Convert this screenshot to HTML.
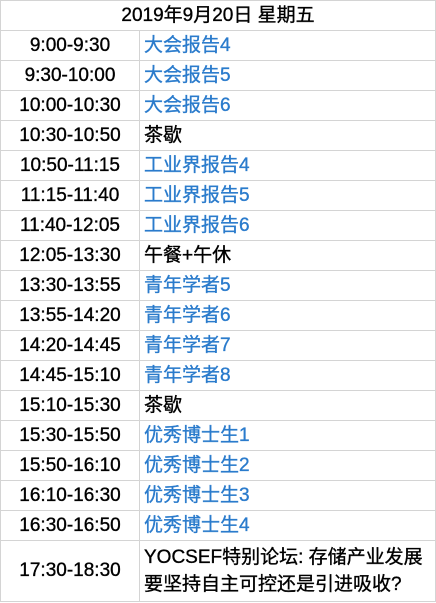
<!DOCTYPE html>
<html><head><meta charset="utf-8"><style>
body{margin:0;background:#fff;width:436px;height:603px;overflow:hidden;font-family:"Liberation Sans","Noto Sans CJK SC",sans-serif;font-size:19px;color:#000;-webkit-text-stroke:0.35px}
table{border-collapse:collapse;position:absolute;left:0;top:0;width:436px;table-layout:fixed}
td{border:1px solid #d4d4d4;height:29px;padding:0;line-height:22px;white-space:nowrap}
td.t{text-align:center}
td.c{padding-left:4px}
.b{color:#2a7bcc}
.h{text-align:center;height:29px}
</style></head><body>
<table>
<colgroup><col style="width:139px"><col></colgroup>
<tr><td colspan="2" class="h">2019年9月20日 星期五</td></tr>
<tr><td class="t">9:00-9:30</td><td class="c b">大会报告4</td></tr>
<tr><td class="t">9:30-10:00</td><td class="c b">大会报告5</td></tr>
<tr><td class="t">10:00-10:30</td><td class="c b">大会报告6</td></tr>
<tr><td class="t">10:30-10:50</td><td class="c">茶歇</td></tr>
<tr><td class="t">10:50-11:15</td><td class="c b">工业界报告4</td></tr>
<tr><td class="t">11:15-11:40</td><td class="c b">工业界报告5</td></tr>
<tr><td class="t">11:40-12:05</td><td class="c b">工业界报告6</td></tr>
<tr><td class="t">12:05-13:30</td><td class="c">午餐+午休</td></tr>
<tr><td class="t">13:30-13:55</td><td class="c b">青年学者5</td></tr>
<tr><td class="t">13:55-14:20</td><td class="c b">青年学者6</td></tr>
<tr><td class="t">14:20-14:45</td><td class="c b">青年学者7</td></tr>
<tr><td class="t">14:45-15:10</td><td class="c b">青年学者8</td></tr>
<tr><td class="t">15:10-15:30</td><td class="c">茶歇</td></tr>
<tr><td class="t">15:30-15:50</td><td class="c b">优秀博士生1</td></tr>
<tr><td class="t">15:50-16:10</td><td class="c b">优秀博士生2</td></tr>
<tr><td class="t">16:10-16:30</td><td class="c b">优秀博士生3</td></tr>
<tr><td class="t">16:30-16:50</td><td class="c b">优秀博士生4</td></tr>
<tr><td class="t" style="height:60px">17:30-18:30</td><td class="c" style="line-height:27px">YOCSEF特别论坛: 存储产业发展<br>要坚持自主可控还是引进吸收?</td></tr>
</table>
</body></html>
